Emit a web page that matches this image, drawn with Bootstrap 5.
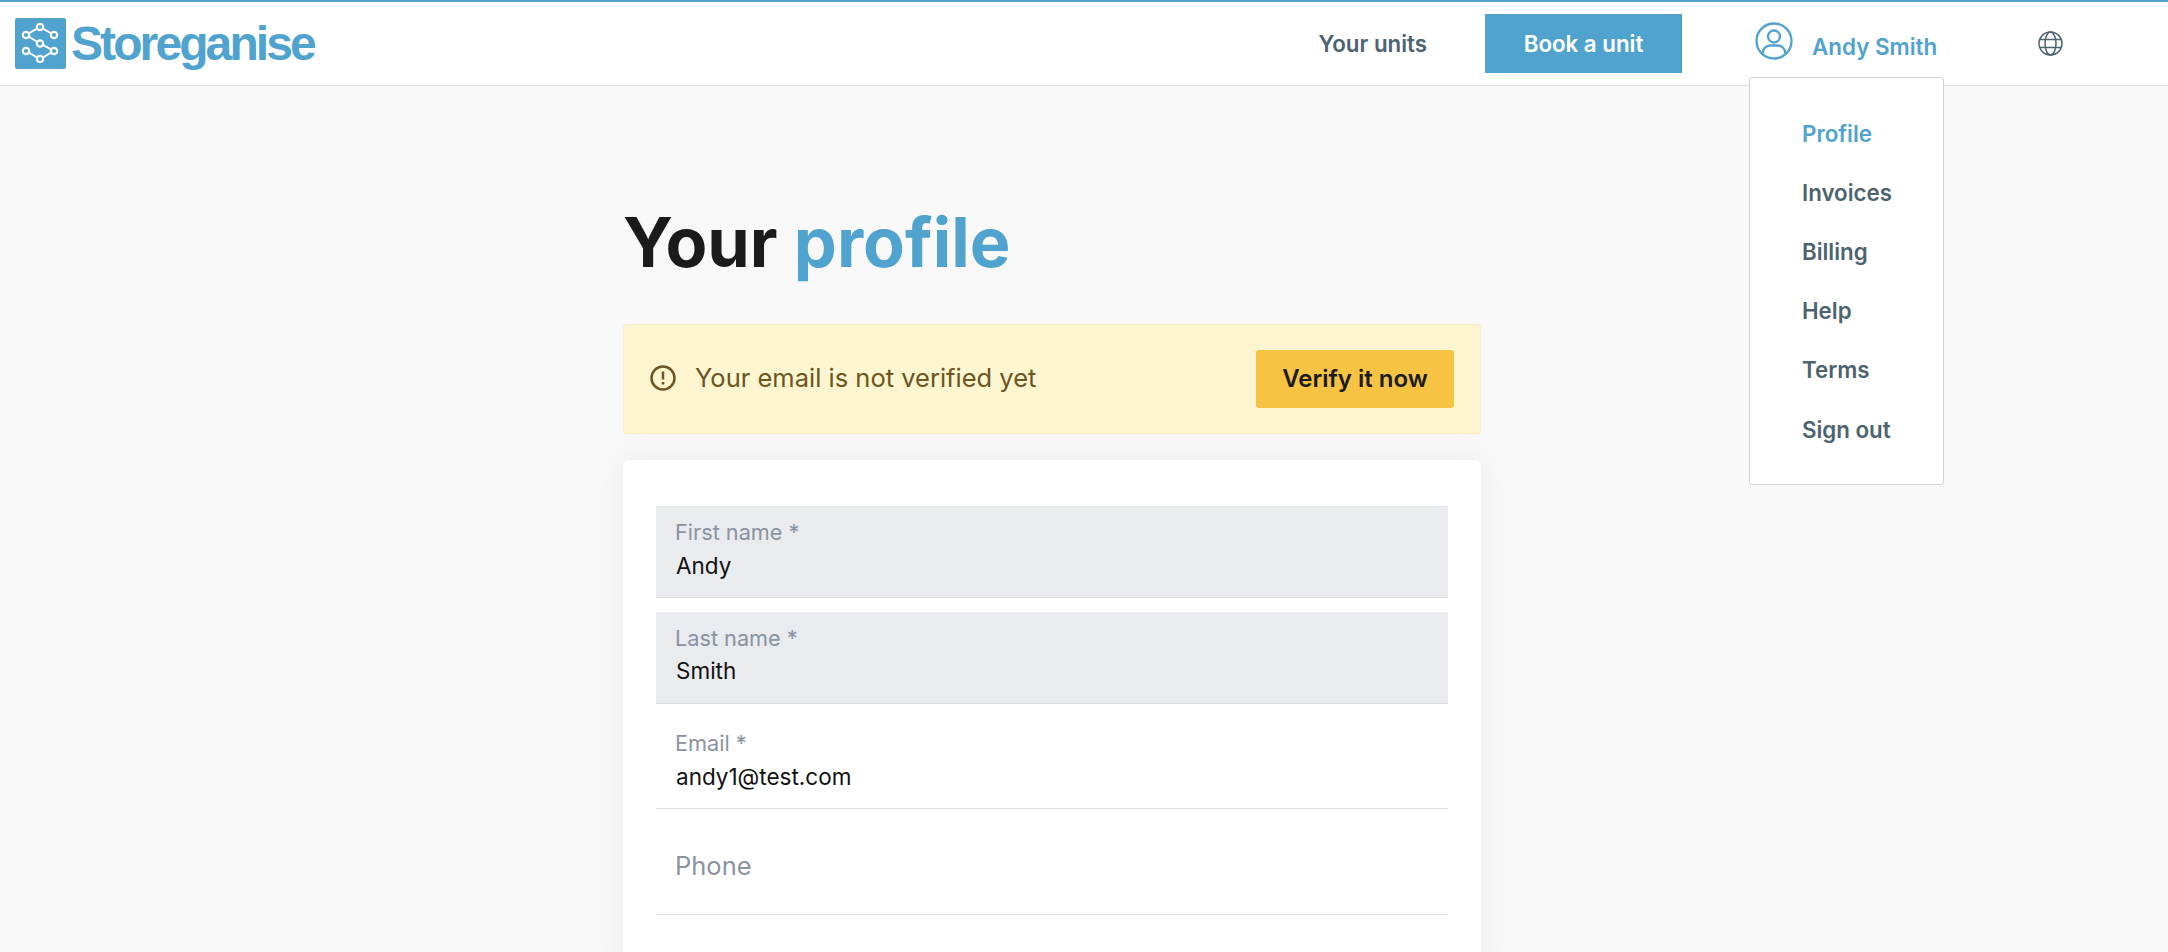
<!DOCTYPE html>
<html lang="en">
<head>
  <meta charset="UTF-8">
  <meta name="viewport" content="width=device-width, initial-scale=1.0">
  <title>Your profile - Storeganise</title>
  <link href="https://cdn.jsdelivr.net/npm/bootstrap@5.3.0/dist/css/bootstrap.min.css" rel="stylesheet">
  <style>
    html, body {
      height: 100%;
      overflow: hidden;
    }
    body {
      background-color: #f8f8f8;
      font-family: Inter, "Liberation Sans", sans-serif;
    }
    .top-bar {
      height: 86px;
      padding: 0;
      background-color: #fff;
      border-top: 2px solid #4fa3ce;
      border-bottom: 1px solid #dedede;
    }
    .brand-link {
      display: flex;
      align-items: center;
      gap: 5px;
      margin: 0 0 0 15px;
      padding: 0;
      color: #4fa3ce;
      font-family: "Liberation Sans", sans-serif;
      font-size: 48px;
      font-weight: 700;
      letter-spacing: -2.9px;
      line-height: 1;
    }
    .brand-link:hover {
      color: #4fa3ce;
    }
    .menu-link {
      color: #4d6370;
      font-size: 22.3px;
      font-weight: 600;
      text-decoration: none;
    }
    .book-btn {
      width: 197px;
      height: 59px;
      margin: 0 73px 0 58px;
      padding: 0;
      border: 0;
      border-radius: 0;
      background-color: #4fa3ce;
      color: #fff;
      font-size: 22.3px;
      font-weight: 600;
      line-height: 59px;
    }
    .user-wrap {
      position: relative;
      display: flex;
      align-items: flex-start;
      gap: 19px;
      width: 283px;
      height: 37px;
      align-self: center;
      margin-top: -7px;
    }
    .user-name {
      margin-top: 11px;
      color: #4fa3ce;
      font-size: 22.4px;
      font-weight: 600;
      line-height: 28px;
    }
    .globe-icon {
      margin-right: 105px;
    }
    .user-menu {
      top: 55px;
      left: -6px;
      width: 195px;
      padding: 26px 0 25px;
      border: 1px solid #d3d3d3;
      border-radius: 3px;
    }
    .user-menu .dropdown-item {
      padding: 0 0 0 52px;
      color: #4d6370;
      font-size: 22.3px;
      font-weight: 600;
      line-height: 59.2px;
    }
    .user-menu .dropdown-item.is-current {
      background: none;
      color: #4fa3ce;
    }
    .page-col {
      width: 858px;
      margin: 0 0 0 623px;
    }
    .page-title {
      margin: 112px 0 38px;
      color: #1b1b1b;
      font-size: 68.3px;
      font-weight: 700;
      line-height: 88px;
    }
    .page-title span {
      color: #4fa3ce;
    }
    .verify-box {
      display: flex;
      align-items: center;
      height: 110px;
      margin: 0 0 26px;
      padding: 0 26px;
      border: 1px solid #fbeec4;
      border-radius: 3px;
      background-color: #fdf4d0;
      color: #6b5520;
      font-size: 25.5px;
    }
    .verify-icon {
      margin: 0 19px 2px 0;
    }
    .verify-text {
      margin-bottom: 2px;
    }
    .verify-btn {
      width: 198px;
      height: 58px;
      margin-left: auto;
      padding: 0;
      border: 0;
      border-radius: 3px;
      background-color: #f6c343;
      color: #1b1b1b;
      font-size: 24px;
      font-weight: 600;
    }
    .verify-btn:hover {
      background-color: #f6c343;
      color: #1b1b1b;
    }
    .profile-card {
      padding: 46px 33px;
      border: 0;
      border-radius: 6px;
      box-shadow: 0 0 30px rgba(0, 0, 0, .06);
    }
    .form-floating > .field-input,
    .form-floating > .field-input:not(:placeholder-shown) {
      height: 92px;
      min-height: 92px;
      margin-bottom: 13.5px;
      padding: 37px 20px 10px;
      border: 0;
      border-bottom: 1px solid #dedede;
      border-radius: 0;
      background-color: #fff;
      color: #111;
      font-size: 22.5px;
      line-height: 32px;
    }
    .form-floating > .field-input:disabled {
      background-color: #e9ebef;
    }
    .form-floating > .field-label {
      height: auto;
      padding: 27px 18px;
      color: #8a93a0;
      font-size: 25.5px;
      line-height: 30px;
    }
    .form-floating > .field-input:not(:placeholder-shown) ~ .field-label {
      padding: 0 0 0 18px;
      top: 10px;
      color: #8a93a0;
      font-size: 21.7px;
      opacity: 1;
      transform: none;
    }
    .form-floating > .field-input:not(:placeholder-shown) ~ .field-label::after {
      display: none;
    }
  </style>
</head>
<body>
  <nav class="navbar top-bar">
    <a class="navbar-brand brand-link" href="#">
      <svg width="51" height="51" viewBox="0 0 51 51">
        <rect width="51" height="51" rx="2" fill="#4fa3ce"/>
        <g fill="none" stroke="#fff" stroke-width="2">
          <path d="M11 17L25 9L39 17M11 17L25 25.500L39 33M11 33L25 41L39 33"/>
          <g fill="#4fa3ce" stroke-width="2.200">
            <circle cx="11" cy="17" r="3.200"/>
            <circle cx="25" cy="9" r="3.200"/>
            <circle cx="39" cy="17" r="3.200"/>
            <circle cx="25" cy="25.500" r="3.200"/>
            <circle cx="11" cy="33" r="3.200"/>
            <circle cx="39" cy="33" r="3.200"/>
            <circle cx="25" cy="41" r="3.200"/>
          </g>
        </g>
      </svg>
      Storeganise
    </a>
    <div class="d-flex align-items-center h-100 ms-auto">
      <a class="menu-link" href="#">Your units</a>
      <a class="btn book-btn" href="#">Book a unit</a>
      <div class="user-wrap">
        <svg width="38" height="38" viewBox="0 0 38 38" fill="none" stroke="#4fa3ce" stroke-width="2.300">
          <circle cx="19" cy="19" r="17.500"/>
          <circle cx="19" cy="14.500" r="6"/>
          <path d="M8 31.500C7.500 27 11 23.500 15 23.500H23C27 23.500 30.500 27 30 31.500"/>
        </svg>
        <span class="user-name">Andy Smith</span>
        <div class="dropdown-menu show user-menu">
          <a class="dropdown-item is-current" href="#">Profile</a>
          <a class="dropdown-item" href="#">Invoices</a>
          <a class="dropdown-item" href="#">Billing</a>
          <a class="dropdown-item" href="#">Help</a>
          <a class="dropdown-item" href="#">Terms</a>
          <a class="dropdown-item" href="#">Sign out</a>
        </div>
      </div>
      <svg class="globe-icon" width="25" height="25" viewBox="0 0 25 25" fill="none" stroke="#4d6370" stroke-width="1.500">
        <circle cx="12.500" cy="12.500" r="11.500"/>
        <ellipse cx="12.500" cy="12.500" rx="5.500" ry="11.500"/>
        <path d="M2 8.500H23M2 16.500H23"/>
      </svg>
    </div>
  </nav>

  <main class="page-col">
    <h1 class="page-title">Your <span>profile</span></h1>

    <div class="verify-box">
      <svg class="verify-icon" width="26" height="26" viewBox="0 0 26 26" fill="none" stroke="#6b5520" stroke-width="2.500">
        <circle cx="13" cy="13" r="11.500"/>
        <path d="M13 6.500V14.500M13 17V19.500"/>
      </svg>
      <span class="verify-text">Your email is not verified yet</span>
      <button class="btn verify-btn" type="button">Verify it now</button>
    </div>

    <div class="card profile-card">
      <form>
        <div class="form-floating">
          <input class="form-control field-input" id="first-name" type="text" value="Andy" placeholder=" " disabled>
          <label class="field-label" for="first-name">First name *</label>
        </div>
        <div class="form-floating">
          <input class="form-control field-input" id="last-name" type="text" value="Smith" placeholder=" " disabled>
          <label class="field-label" for="last-name">Last name *</label>
        </div>
        <div class="form-floating">
          <input class="form-control field-input" id="email" type="email" value="andy1@test.com" placeholder=" ">
          <label class="field-label" for="email">Email *</label>
        </div>
        <div class="form-floating">
          <input class="form-control field-input" id="phone" type="tel" placeholder=" ">
          <label class="field-label" for="phone">Phone</label>
        </div>
      </form>
    </div>
  </main>

  <script src="https://cdn.jsdelivr.net/npm/bootstrap@5.3.0/dist/js/bootstrap.bundle.min.js"></script>
</body>
</html>
